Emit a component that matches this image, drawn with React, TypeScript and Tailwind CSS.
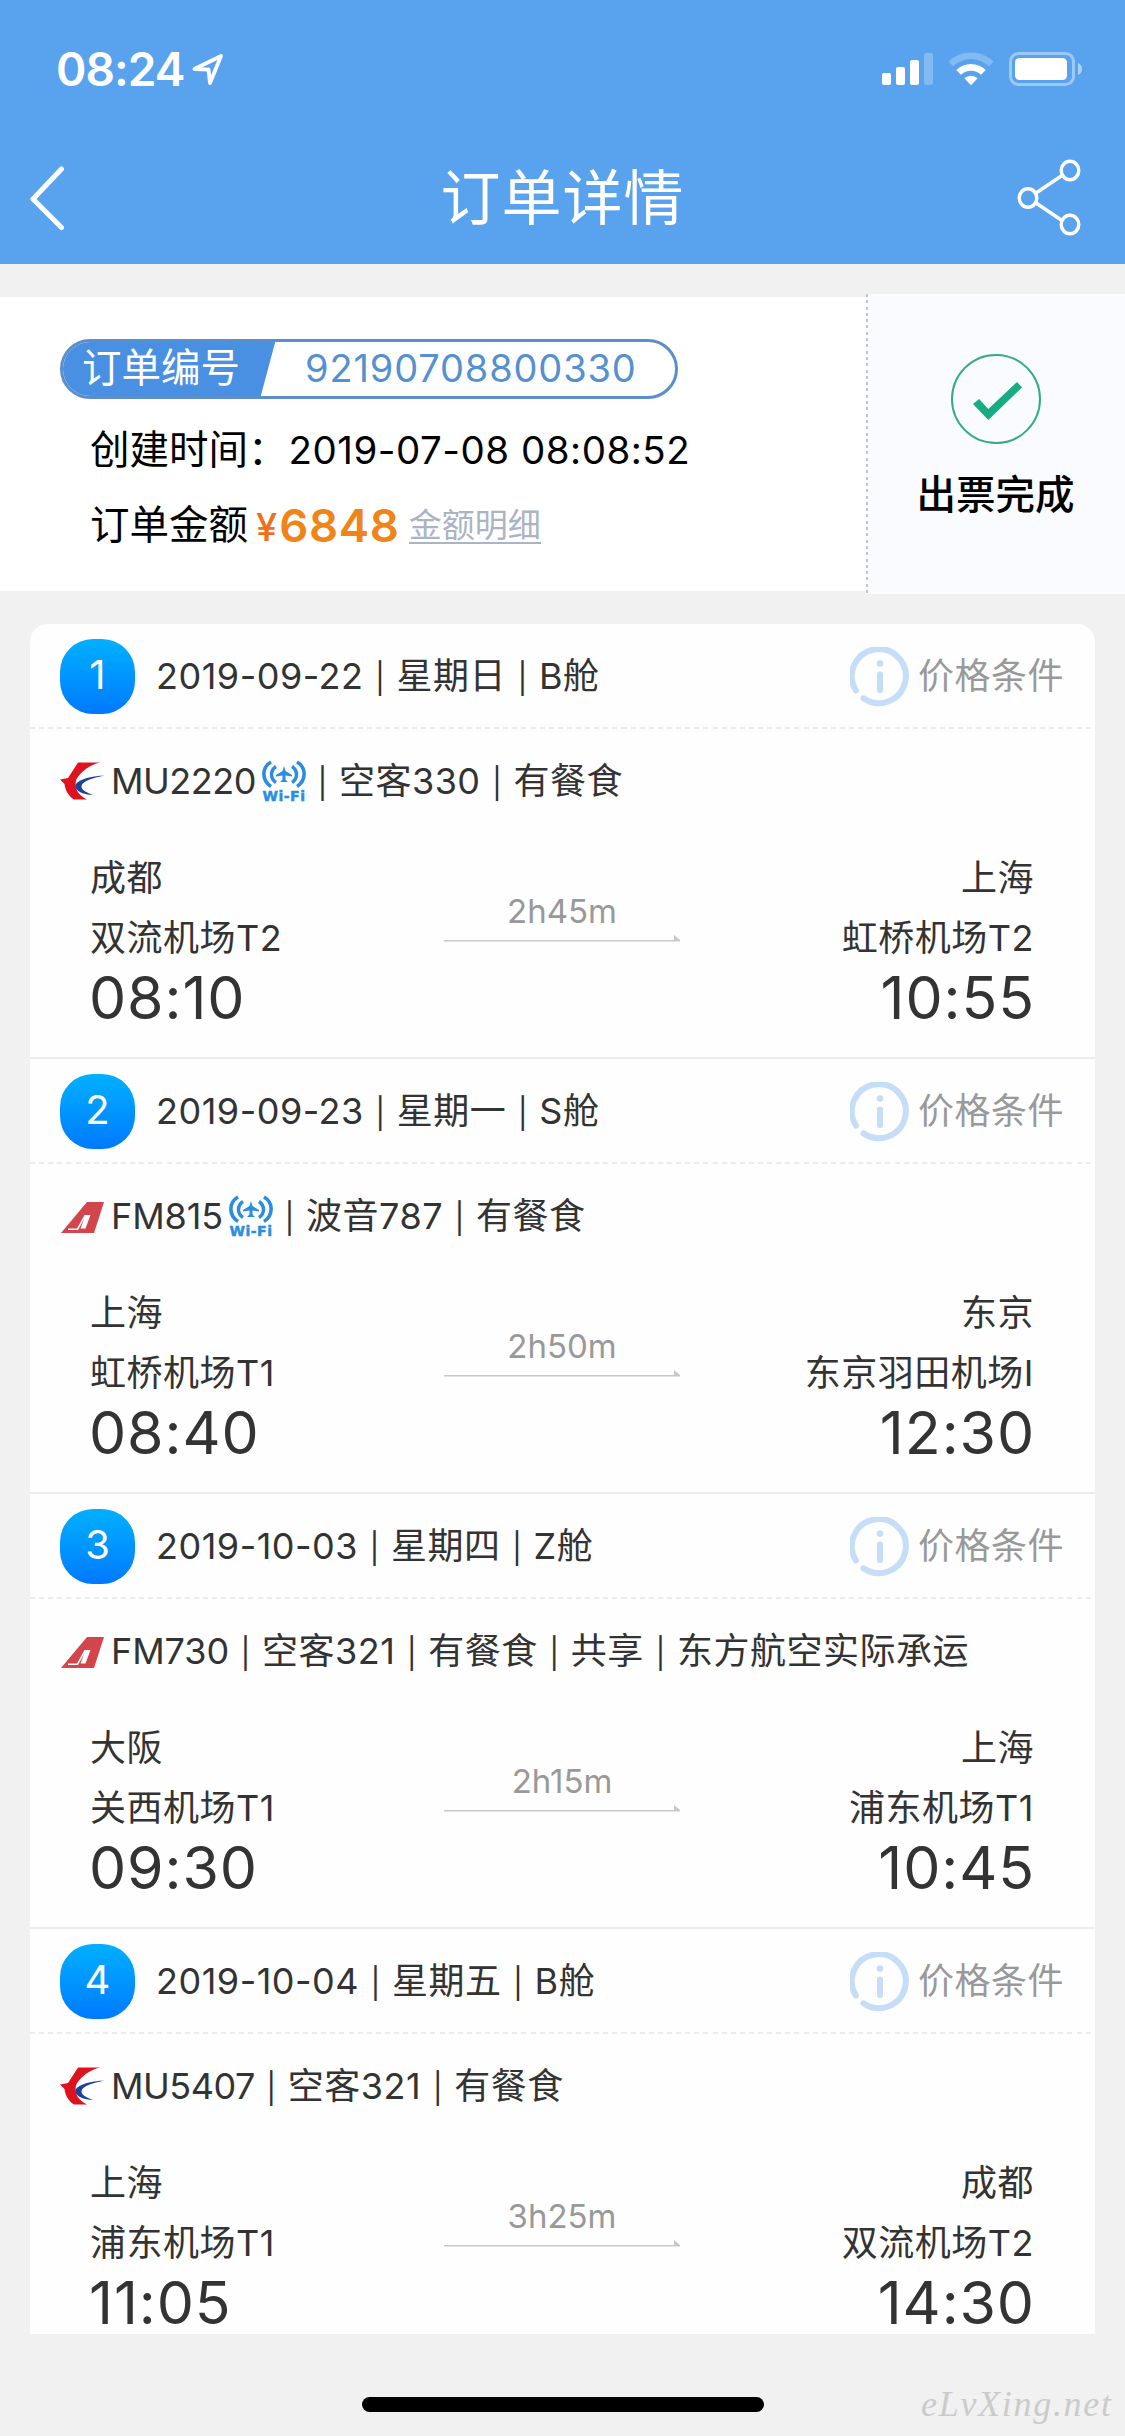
import { Fragment } from 'react';

interface Stop {
  city: string;
  airport: string;
  time: string;
}

interface Segment {
  date: string[];
  airline: 'MU' | 'FM';
  flightNo: string;
  wifi: boolean;
  details: string[];
  duration: string;
  from: Stop;
  to: Stop;
}

const segments: Segment[] = [
  {
    date: ['2019-09-22', '星期日', 'B舱'],
    airline: 'MU',
    flightNo: 'MU2220',
    wifi: true,
    details: ['空客330', '有餐食'],
    duration: '2h45m',
    from: { city: '成都', airport: '双流机场T2', time: '08:10' },
    to: { city: '上海', airport: '虹桥机场T2', time: '10:55' },
  },
  {
    date: ['2019-09-23', '星期一', 'S舱'],
    airline: 'FM',
    flightNo: 'FM815',
    wifi: true,
    details: ['波音787', '有餐食'],
    duration: '2h50m',
    from: { city: '上海', airport: '虹桥机场T1', time: '08:40' },
    to: { city: '东京', airport: '东京羽田机场I', time: '12:30' },
  },
  {
    date: ['2019-10-03', '星期四', 'Z舱'],
    airline: 'FM',
    flightNo: 'FM730',
    wifi: false,
    details: ['空客321', '有餐食', '共享', '东方航空实际承运'],
    duration: '2h15m',
    from: { city: '大阪', airport: '关西机场T1', time: '09:30' },
    to: { city: '上海', airport: '浦东机场T1', time: '10:45' },
  },
  {
    date: ['2019-10-04', '星期五', 'B舱'],
    airline: 'MU',
    flightNo: 'MU5407',
    wifi: false,
    details: ['空客321', '有餐食'],
    duration: '3h25m',
    from: { city: '上海', airport: '浦东机场T1', time: '11:05' },
    to: { city: '成都', airport: '双流机场T2', time: '14:30' },
  },
];

function StatusBar() {
  return (
    <div className="flex h-[138px] items-center justify-between pl-[56px] pr-[42px]">
      <div className="flex items-center">
        <span className="text-[46px] leading-none font-semibold tracking-[-0.9px]">08:24</span>
        <svg className="ml-[6px] h-[34px] w-[34px]" viewBox="0 0 34 34" fill="none">
          <path d="M3.5 17 30 4 19 31 17.5 17.5Z" stroke="white" strokeWidth="3.8" strokeLinejoin="round" />
        </svg>
      </div>
      <svg className="h-[36px] w-[202px]" viewBox="881 51 202 36" fill="white">
        <rect x="882" y="73" width="9" height="12" rx="2" />
        <rect x="896" y="67" width="9" height="18" rx="2" />
        <rect x="910" y="60" width="9" height="25" rx="2" />
        <rect x="924" y="53" width="9" height="32" rx="2" opacity="0.25" />
        <path d="M948.5 61.5a32.5 32.5 0 0 1 45 0l-4.6 4.8a25.8 25.8 0 0 0-35.8 0z" opacity="0.25" />
        <path d="M956.3 70a21 21 0 0 1 29.4 0l-4.7 4.8a14.3 14.3 0 0 0-20 0z" />
        <path d="M964.4 78.3a9.5 9.5 0 0 1 13.2 0l-6.6 6.9z" />
        <rect x="1010.5" y="53.5" width="63" height="31" rx="8" fill="none" stroke="white" strokeWidth="3" opacity="0.4" />
        <rect x="1015" y="58" width="52" height="22" rx="4.5" />
        <path d="M1078 63a6.5 6.5 0 0 1 0 12z" opacity="0.5" />
      </svg>
    </div>
  );
}

function TitleBar() {
  return (
    <div className="grid h-[126px] grid-cols-[1fr_auto_1fr] items-center pb-[6px] pl-[29px] pr-[43px]">
      <svg className="h-[66px] w-[56px]" viewBox="0 0 56 66" fill="none">
        <path d="M32.5 4 4 34 32.5 62.5" stroke="white" strokeWidth="5" strokeLinecap="round" strokeLinejoin="round" />
      </svg>
      <h1 className="pb-[1px] pl-[14px] text-[60px] leading-none tracking-[1px]">订单详情</h1>
      <svg className="h-[78px] w-[66px] justify-self-end" viewBox="1016 159.5 66 78" fill="none" stroke="white" strokeWidth="3.4">
        <ellipse cx="1070" cy="171" rx="8.8" ry="9.2" />
        <ellipse cx="1028" cy="198.5" rx="8.8" ry="9.2" />
        <ellipse cx="1070" cy="225" rx="8.8" ry="9.2" />
        <path d="M1036 193.5 1062 176M1036 203.5 1062 221" />
      </svg>
    </div>
  );
}

function OrderSummary() {
  return (
    <section className="mt-[30px] flex h-[300px] items-center">
      <div className="h-[294px] w-[866px] bg-white pl-[60px] pt-[42px]">
        <div className="flex h-[60px] w-[618px] items-center overflow-hidden rounded-full border-[3px] border-[#5b8fcb] bg-white">
          <div className="flex h-[60px] w-[213px] shrink-0 items-center bg-[#4a90e2] pl-[19px] text-[39.5px] leading-none text-white [clip-path:polygon(0_0,100%_0,197px_100%,0_100%)]">
            订单编号
          </div>
          <span className="ml-[29px] pb-[2px] text-[38px] leading-none tracking-[0.85px] text-[#5590d0]">92190708800330</span>
        </div>
        <div className="mt-[26px] flex h-[52px] items-center pl-[30px] text-[39.5px] leading-none text-black">
          <span>创建时间：</span>
          <span className="ml-[1px] pb-[1px] text-[38.5px] tracking-[0.5px]">2019-07-08 08:08:52</span>
        </div>
        <div className="mt-[23px] flex h-[52px] items-center pl-[30px] text-[39.5px] leading-none text-black">
          <span>订单金额</span>
          <span className="ml-[8px] pt-[2px] text-[38px] font-medium text-[#ee6f1c]">¥</span>
          <span className="ml-[2px] text-[45.5px] font-semibold tracking-[0.7px] text-[#ef8519]">6848</span>
          <span className="ml-[9px] border-b-2 border-[#aab4c4] text-[33px] text-[#aab4c4]">金额明细</span>
        </div>
      </div>
      <div className="h-full w-[2px] bg-[repeating-linear-gradient(180deg,#c4c4c8_0_3px,#f9fbff_3px_6.3px)]" />
      <div className="flex h-full flex-1 flex-col items-center bg-[#f9fbff] pr-[2px] pt-[60px]">
        <svg className="h-[90px] w-[90px]" viewBox="951 354 90 90">
          <circle cx="996" cy="399" r="44" fill="none" stroke="#35ab87" strokeWidth="2" />
          <path d="M973 404 979 399 988.3 409 1017 382 1022 387.5 988.3 420Z" fill="#17ac84" />
        </svg>
        <span className="mt-[32px] text-[39.5px] leading-none font-medium text-black">出票完成</span>
      </div>
    </section>
  );
}

function InfoIcon() {
  return (
    <svg className="h-[60px] w-[60px]" viewBox="0 0 60 60" fill="none" stroke="#c5ddf6" strokeWidth="6" strokeLinecap="round">
      <path d="M6 43.5A27 27 0 1 1 13.5 51.3" />
      <path d="M30 27.5V43" />
      <circle cx="30" cy="16.5" r="3.2" fill="#c5ddf6" stroke="none" />
    </svg>
  );
}

function Separator() {
  return <span className="inline-block w-[33px] text-center text-[30px] tracking-normal">|</span>;
}

function AirlineLogo({ airline }: { airline: Segment['airline'] }) {
  if (airline === 'MU') {
    return (
      <svg className="h-[38px] w-[45px]" viewBox="0 0 45 38">
        <path d="M18 .5H40C30 3 21 9 16 18 14.5 27 18 33 27 37.5H14C9 35 5 28 4.500 22L0 17.5 8 16Z" fill="#dd1420" />
        <path d="M45 13.500C30 14 16 18 15.500 24 15.500 30 24 32.500 33 33 26 30 21.500 28 21.500 24.500 21.500 19.500 32 16 45 13.500Z" fill="#1c429a" />
      </svg>
    );
  }
  return (
    <svg className="h-[38px] w-[45px]" viewBox="0 0 45 38">
      <path d="M27 5H44L34 36H1Z" fill="#d2454c" />
      <path d="M8 31.500H17L24.500 18H30.500L25.500 31.500H20.500L24 22 18 33H8Z" fill="#fff" />
    </svg>
  );
}

function WifiBadge() {
  return (
    <svg className="ml-[6px] h-[42px] w-[44px]" viewBox="0 0 44 42" fill="none" stroke="#2b8de0">
      <path d="M9 2C-0.500 7.500-0.500 20.500 9 26.500M35 2C44.500 7.500 44.500 20.500 35 26.500" strokeWidth="3.6" />
      <path d="M14 6.500C8 10.500 8 18.500 14 22.500M30 6.500C36 10.500 36 18.500 30 22.500" strokeWidth="3.4" />
      <path d="M22 6 23.500 11 30 15V16.500L23.500 15.500V19.500L26 22H18L20.500 19.500V15.500L14 16.500V15L20.500 11Z" fill="#2b8de0" stroke="none" />
      <text x="0.5" y="40.5" fontSize="14" fontWeight="700" textLength="43" lengthAdjust="spacingAndGlyphs" fontFamily="DejaVu Sans" fill="#2b8de0" strokeWidth="0.5">
        Wi-Fi
      </text>
    </svg>
  );
}

function StopColumn({ stop, end = false }: { stop: Stop; end?: boolean }) {
  return (
    <div className={`flex w-[300px] flex-col whitespace-nowrap ${end ? 'items-end' : 'items-start'}`}>
      <span className="h-[60px] leading-[60px]">{stop.city}</span>
      <span className="h-[60px] leading-[60px]">{stop.airport}</span>
      <span className={`h-[60px] text-[59px] leading-[60px] tracking-[0.9px] ${end ? '-mr-[1px]' : '-ml-[1px]'}`}>{stop.time}</span>
    </div>
  );
}

function SegmentCard({ segment, index }: { segment: Segment; index: number }) {
  return (
    <article className="h-[435px] border-b-2 border-[#ececec] text-[36px] leading-none tracking-[0.5px] text-[#333] last:h-[405px] last:border-b-0">
      <div className="flex h-[103px] items-center pt-[2px] pl-[30px] pr-[31px]">
        <div className="flex h-[75px] w-[75px] items-center justify-center rounded-[33px] bg-gradient-to-b from-[#00b0ff] to-[#0079ff] pb-[3px] text-[40px] tracking-normal text-white">
          {index}
        </div>
        <span className="ml-[21px] flex-1 pb-[1px]">
          {segment.date.map((part, i) => (
            <Fragment key={part}>
              {i > 0 && <Separator />}
              {part}
            </Fragment>
          ))}
        </span>
        <InfoIcon />
        <span className="ml-[8px] pb-[1px] text-[#999]">价格条件</span>
      </div>
      <div className="h-[2px] bg-[repeating-linear-gradient(90deg,#ebebeb_0_5px,transparent_5px_9.1px)]" />
      <div className="flex h-[102px] items-center pt-[1px] pl-[30px]">
        <AirlineLogo airline={segment.airline} />
        <span className={segment.airline === 'MU' ? 'ml-[6px] tracking-[-0.5px]' : 'ml-[6px] tracking-[-0.1px]'}>
          {segment.flightNo}
        </span>
        {segment.wifi && <WifiBadge />}
        <span>
          {segment.details.map((part) => (
            <Fragment key={part}>
              <Separator />
              {part}
            </Fragment>
          ))}
        </span>
      </div>
      <div className="mt-[17px] flex h-[180px] justify-between pl-[60px] pr-[61px]">
        <StopColumn stop={segment.from} />
        <div className="flex w-[236px] flex-col items-center pt-[47px]">
          <span className="text-[33px] leading-none tracking-normal text-[#999]">{segment.duration}</span>
          <svg className="mt-[6px] h-[8px] w-[236px]" viewBox="0 0 236 8">
            <path d="M0 6H230V1L236 6V7.5H0Z" fill="#c8c8c8" />
          </svg>
        </div>
        <StopColumn stop={segment.to} end />
      </div>
    </article>
  );
}

export default function App() {
  return (
    <div className="flex h-[2436px] w-[1125px] flex-col overflow-hidden bg-[#f1f1f1] font-['Inter','Noto_Sans_CJK_SC',sans-serif]">
      <header className="h-[264px] shrink-0 bg-[#59a3ee] text-white">
        <StatusBar />
        <TitleBar />
      </header>

      <OrderSummary />

      <main className="mx-[30px] mt-[30px] h-[1710px] shrink-0 rounded-t-[18px] bg-[#fefefe]">
        {segments.map((segment, i) => (
          <SegmentCard key={segment.flightNo} segment={segment} index={i + 1} />
        ))}
      </main>

      <footer className="relative flex flex-1 justify-center pt-[63px]">
        <div className="h-[15px] w-[402px] rounded-full bg-black" />
        <svg className="absolute right-[8px] bottom-[2px] h-[56px] w-[200px]" viewBox="0 0 200 56">
          <text x="4" y="38" fontSize="36" fontStyle="italic" fontFamily="Liberation Serif" textLength="190" fill="#cbcbcb">
            eLvXing.net
          </text>
        </svg>
      </footer>
    </div>
  );
}
